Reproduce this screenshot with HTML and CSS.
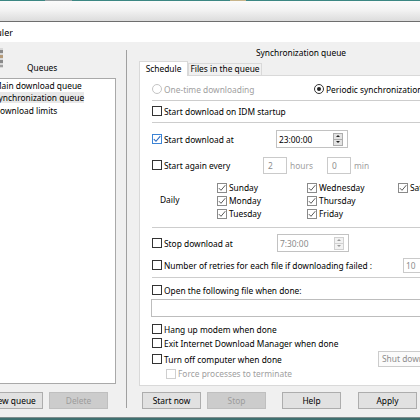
FILE: index.html
```html
<!DOCTYPE html>
<html>
<head>
<meta charset="utf-8">
<title>Scheduler</title>
<link rel="stylesheet" href="styles.css">
</head>
<body>
<div class="desk"></div>
<div class="frame"></div>
<div class="titlebar"><div class="title-clip"><span>Scheduler</span></div></div>
<div class="dialog">
  <div class="left">
    <div class="left-head">
      <div class="qicon">
        <svg width="17" height="20" viewBox="0 0 17 20"><rect x="1" y="0" width="16" height="20" fill="#d8d8d8"/><rect x="12" y="2" width="5" height="3" fill="#8a8a8a"/><rect x="12" y="7" width="5" height="3" fill="#b59a78"/><rect x="12" y="12" width="5" height="3" fill="#8a8a8a"/><rect x="12" y="17" width="5" height="2" fill="#a0a0a0"/></svg>
      </div>
      <div class="queues-label">Queues</div>
    </div>
    <div class="listbox">
      <div class="item"><span>Main download queue</span></div>
      <div class="item sel"><span>Synchronization queue</span></div>
      <div class="item"><span>Download limits</span></div>
    </div>
    <div class="left-btns">
      <button class="btn">New queue</button>
      <button class="btn dis">Delete</button>
    </div>
  </div>
  <div class="vsep"></div>
  <div class="right">
    <div class="rtitle">Synchronization queue</div>
    <div class="tabs">
      <div class="tab active">Schedule</div>
      <div class="tab">Files in the queue</div>
    </div>
    <div class="panel">
      <div class="row r-radio">
        <label class="ck w162 dim"><span class="rb dis"></span>One-time downloading</label>
        <label class="ck"><span class="rb on"></span>Periodic synchronization</label>
      </div>
      <div class="sep s1"></div>
      <div class="row r-idm">
        <label class="ck"><span class="cb"></span>Start download on IDM startup</label>
      </div>
      <div class="sep s2"></div>
      <div class="row r-start">
        <label class="ck w124"><span class="cb checked"><svg width="8" height="8" viewBox="0 0 8 8"><path d="M0.8 4.1 L3 6.3 L7.3 1.2" fill="none" stroke="#2b6cc4" stroke-width="1.1"/></svg></span>Start download at</label>
        <div class="time"><span class="tv">23:00:00</span><span class="spin"><span class="up"></span><span class="dn"></span></span></div>
      </div>
      <div class="row r-again">
        <label class="ck w111"><span class="cb"></span>Start again every</label>
        <div class="num">2</div><span class="unit w37">hours</span><div class="num">0</div><span class="unit">min</span>
      </div>
      <div class="days">
        <div class="daily">Daily</div>
        <label class="ck d1"><span class="cb day"><svg width="8" height="8" viewBox="0 0 8 8"><path d="M0.8 4.1 L3 6.3 L7.3 1.2" fill="none" stroke="#5a5a5a" stroke-width="1"/></svg></span>Sunday</label>
        <label class="ck d2"><span class="cb day"><svg width="8" height="8" viewBox="0 0 8 8"><path d="M0.8 4.1 L3 6.3 L7.3 1.2" fill="none" stroke="#5a5a5a" stroke-width="1"/></svg></span>Monday</label>
        <label class="ck d3"><span class="cb day"><svg width="8" height="8" viewBox="0 0 8 8"><path d="M0.8 4.1 L3 6.3 L7.3 1.2" fill="none" stroke="#5a5a5a" stroke-width="1"/></svg></span>Tuesday</label>
        <label class="ck d4"><span class="cb day"><svg width="8" height="8" viewBox="0 0 8 8"><path d="M0.8 4.1 L3 6.3 L7.3 1.2" fill="none" stroke="#5a5a5a" stroke-width="1"/></svg></span>Wednesday</label>
        <label class="ck d5"><span class="cb day"><svg width="8" height="8" viewBox="0 0 8 8"><path d="M0.8 4.1 L3 6.3 L7.3 1.2" fill="none" stroke="#5a5a5a" stroke-width="1"/></svg></span>Thursday</label>
        <label class="ck d6"><span class="cb day"><svg width="8" height="8" viewBox="0 0 8 8"><path d="M0.8 4.1 L3 6.3 L7.3 1.2" fill="none" stroke="#5a5a5a" stroke-width="1"/></svg></span>Friday</label>
        <label class="ck d7"><span class="cb day"><svg width="8" height="8" viewBox="0 0 8 8"><path d="M0.8 4.1 L3 6.3 L7.3 1.2" fill="none" stroke="#5a5a5a" stroke-width="1"/></svg></span>Saturday</label>
      </div>
      <div class="sep s3"></div>
      <div class="row r-stop">
        <label class="ck w125"><span class="cb"></span>Stop download at</label>
        <div class="time off"><span class="tv">7:30:00</span><span class="spin"><span class="up"></span><span class="dn"></span></span></div>
      </div>
      <div class="row r-retry">
        <label class="ck w251"><span class="cb"></span>Number of retries for each file if downloading failed :</label>
        <div class="num wide">10</div>
      </div>
      <div class="sep s4"></div>
      <div class="row r-open">
        <label class="ck"><span class="cb"></span>Open the following file when done:</label>
      </div>
      <div class="textinput"></div>
      <div class="row r-hang">
        <label class="ck"><span class="cb"></span>Hang up modem when done</label>
      </div>
      <div class="row r-exit">
        <label class="ck"><span class="cb"></span>Exit Internet Download Manager when done</label>
      </div>
      <div class="row r-turn">
        <label class="ck w226"><span class="cb"></span>Turn off computer when done</label>
        <div class="select">Shut down</div>
      </div>
      <div class="row r-force">
        <label class="ck dim"><span class="cb dis"></span>Force processes to terminate</label>
      </div>
    </div>
    <div class="right-btns">
      <button class="btn b-start">Start now</button>
      <button class="btn dis b-stop">Stop</button>
      <button class="btn b-help">Help</button>
      <button class="btn b-apply">Apply</button>
    </div>
  </div>
</div>
<div class="bottomedge"></div>
</body>
</html>
```

FILE: styles.css
```css
* { box-sizing: border-box; }
html, body { margin: 0; padding: 0; }
body {
  width: 420px;
  height: 420px;
  overflow: hidden;
  background: #f0f0f0;
  font-family: "Noto Sans", "Open Sans", sans-serif;
  font-size: 8.4px;
  color: #000;
}
.desk {
  height: 1px;
  background: linear-gradient(90deg, #3c8783 0 45px, #9aa2a4 45px 72px, #3c8783 72px 230px, #c7b48a 230px 246px, #3c8783 246px);
}
.frame {
  height: 20px;
  background: linear-gradient(#fbfbfb, #f3f3f3 45%, #dcdcdc);
}
.titlebar {
  height: 21px;
  border-top: 1px solid #6e6e6e;
  background: #fff;
  display: flex;
  align-items: center;
}
.title-clip {
  width: 13px;
  overflow: hidden;
  display: flex;
  justify-content: flex-end;
  white-space: nowrap;
  font-size: 9px;
}
.dialog {
  display: flex;
  height: 375px;
}
.left {
  flex: none;
  width: 136px;
  margin-left: -10px;
  padding-right: 10px;
  display: flex;
  flex-direction: column;
}
.left-head {
  height: 36px;
  display: flex;
}
.qicon {
  flex: none;
  width: 17px;
  height: 20px;
  margin-top: 6px;
  margin-left: -4px;
}
.qicon svg { display: block; }
.queues-label {
  margin-top: 20px;
  margin-left: 24px;
  line-height: 12px;
}
.listbox {
  height: 306px;
  border: 1px solid #a9a9a9;
  background: #fff;
  padding-top: 0.5px;
}
.item {
  height: 12.5px;
  line-height: 12.5px;
  padding-left: 3px;
  white-space: nowrap;
}
.item.sel span { background: #e8e8e8; }
.left-btns {
  margin-top: 8px;
  display: flex;
  justify-content: flex-end;
  gap: 6px;
  padding-right: 8px;
}
.btn {
  flex: none;
  width: 59px;
  height: 17px;
  padding: 0;
  border: 1px solid #adadad;
  background: #e1e1e1;
  font: inherit;
  color: #000;
  line-height: 14px;
  text-align: center;
}
.btn.dis {
  background: #cccccc;
  border-color: #bfbfbf;
  color: #9c9c9c;
}
.vsep {
  flex: none;
  width: 1px;
  height: 358px;
  margin-top: 8px;
  background: #a0a0a0;
}
.right {
  flex: none;
  width: 348px;
  display: flex;
  flex-direction: column;
}
.rtitle {
  height: 19px;
  padding-top: 5px;
  line-height: 12px;
  text-align: center;
  white-space: nowrap;
}
.tabs {
  margin-left: 12px;
  height: 14px;
  display: flex;
  align-items: flex-start;
  position: relative;
  z-index: 1;
}
.tab {
  flex: none;
  width: 74px;
  height: 12px;
  margin-top: 2px;
  border: 1px solid #d9d9d9;
  border-bottom: none;
  background: #f0f0f0;
  line-height: 10px;
  text-align: center;
  white-space: nowrap;
}
.tab.active {
  width: 49px;
  height: 15px;
  margin-top: 0;
  background: #fff;
  line-height: 13px;
}
.panel {
  margin-left: 12px;
  height: 311px;
  border: 1px solid #d9d9d9;
  background: #fff;
  padding-left: 12px;
}
.row {
  display: flex;
  align-items: center;
  white-space: nowrap;
}
.ck {
  flex: none;
  display: flex;
  align-items: center;
  white-space: nowrap;
}
.dim { color: #a0a0a0; }
.w111 { width: 111px; }
.w124 { width: 124px; }
.w125 { width: 125px; }
.w162 { width: 162px; }
.w226 { width: 226px; }
.w251 { width: 251px; }
.cb {
  flex: none;
  width: 10px;
  height: 10px;
  margin-right: 2px;
  border: 1px solid #333;
  background: #fff;
  display: flex;
  align-items: center;
  justify-content: center;
}
.cb svg { display: block; }
.cb.checked { border-color: #3b84d6; }
.cb.day { border-color: #8a8a8a; }
.cb.dis { border-color: #cfcfcf; }
.rb {
  flex: none;
  width: 10px;
  height: 10px;
  margin-right: 2px;
  border: 1px solid #333;
  border-radius: 50%;
  background: #fff;
  display: flex;
  align-items: center;
  justify-content: center;
}
.rb.dis { border-color: #c4c4c4; }
.rb.on::after {
  content: "";
  width: 4px;
  height: 4px;
  border-radius: 50%;
  background: #222;
}
.sep {
  height: 1px;
  background: #cdcdcd;
}
.r-radio { margin-top: 6px; height: 14px; }
.s1 { margin-top: 4px; }
.r-idm { margin-top: 3px; height: 14px; }
.s2 { margin-top: 4px; }
.r-start { margin-top: 7px; height: 18px; }
.r-again { margin-top: 8px; height: 18px; }
.days {
  margin-top: 7px;
  display: grid;
  grid-template-columns: 65px 90px 91px 60px;
  grid-template-rows: repeat(3, 13px);
}
.daily {
  grid-row: 1 / 4;
  grid-column: 1;
  align-self: center;
  padding-left: 8px;
  padding-bottom: 3px;
}
.d1 { grid-column: 2; grid-row: 1; }
.d2 { grid-column: 2; grid-row: 2; }
.d3 { grid-column: 2; grid-row: 3; }
.d4 { grid-column: 3; grid-row: 1; }
.d5 { grid-column: 3; grid-row: 2; }
.d6 { grid-column: 3; grid-row: 3; }
.d7 { grid-column: 4; grid-row: 1; }
.s3 { margin-top: 7px; }
.r-stop { margin-top: 6px; height: 18px; }
.r-retry { margin-top: 5px; height: 16px; }
.s4 { margin-top: 4px; }
.r-open { margin-top: 5px; height: 14px; }
.textinput {
  margin-top: 2px;
  margin-left: -1px;
  height: 18px;
  border: 1px solid #bdbdbd;
  background: #fff;
}
.r-hang { margin-top: 5px; height: 14px; }
.r-exit { height: 14px; }
.r-turn { margin-top: 1px; height: 16px; }
.r-force { height: 13px; padding-left: 14px; }
.time {
  flex: none;
  width: 72px;
  height: 18px;
  border: 1px solid #c2c2c2;
  background: #fff;
  display: flex;
  align-items: center;
  padding-left: 2px;
}
.time.off .tv { color: #8a8a8a; }
.spin {
  margin-left: auto;
  margin-right: 4px;
  width: 10px;
  height: 13px;
  border: 1px solid #adadad;
  background: #e4e4e4;
  display: flex;
  flex-direction: column;
}
.time.off .spin { border-color: #d0d0d0; background: #f2f2f2; }
.up, .dn {
  flex: 1;
  display: flex;
  align-items: center;
  justify-content: center;
}
.up { border-bottom: 1px solid #adadad; }
.time.off .up { border-bottom-color: #d0d0d0; }
.up::after {
  content: "";
  border-left: 2px solid transparent;
  border-right: 2px solid transparent;
  border-bottom: 2px solid #222;
}
.dn::after {
  content: "";
  border-left: 2px solid transparent;
  border-right: 2px solid transparent;
  border-top: 2px solid #222;
}
.time.off .up::after { border-bottom-color: #999; }
.time.off .dn::after { border-top-color: #999; }
.num {
  flex: none;
  width: 24px;
  height: 17px;
  border: 1px solid #cacaca;
  background: #fff;
  color: #8d8d8d;
  padding-left: 4px;
  line-height: 15px;
}
.num.wide { width: 30px; height: 15px; line-height: 13px; padding-left: 2px; }
.unit {
  flex: none;
  margin-left: 3px;
  color: #a0a0a0;
}
.w37 { width: 37px; }
.select {
  flex: none;
  width: 60px;
  height: 16px;
  border: 1px solid #cccccc;
  background: #fbfbfb;
  color: #8d8d8d;
  padding-left: 3px;
  line-height: 14px;
}
.right-btns {
  margin-top: 6px;
  margin-left: 15px;
  display: flex;
}
.b-stop { margin-left: 6px; }
.b-help { margin-left: 16px; }
.b-apply { margin-left: 17px; }
.bottomedge {
  height: 3px;
  border-top: 1px solid #7f8e8e;
  background: #3f7070;
}
```
